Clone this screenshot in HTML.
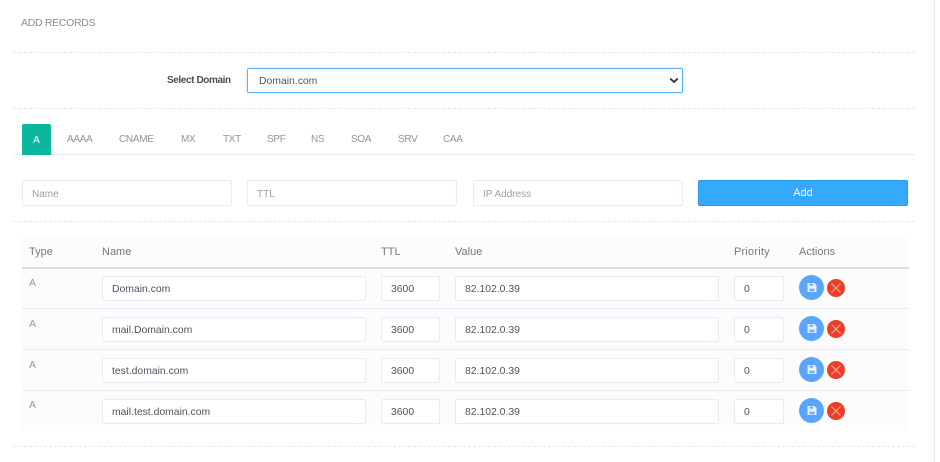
<!DOCTYPE html>
<html><head><meta charset="utf-8">
<style>
html,body{margin:0;padding:0;background:#fff}
body{width:940px;height:462px;position:relative;overflow:hidden;font-family:"Liberation Sans",sans-serif;font-size:10.4px;color:#5f6670}
.a{position:absolute;white-space:nowrap}
.t{position:absolute;white-space:nowrap;line-height:14px;height:14px}
.d{position:absolute;left:14px;width:901px;height:0;border-top:1px dashed #e3e8ee}
.i{position:absolute;box-sizing:border-box;height:25px;background:#fff;border:1px solid #e6ecf3;border-radius:2px;line-height:26px;padding-left:9px;color:#4d545d;white-space:nowrap}
.p{height:26px;line-height:27px;color:#9a9fa6;font-size:10px}
.tab{position:absolute;top:133px;line-height:14px;color:#8f959c;white-space:nowrap;font-size:10px;letter-spacing:-.3px}
.h{position:absolute;top:245px;line-height:14px;color:#74797f;white-space:nowrap;font-size:11px}
.s{position:absolute;left:799px;width:25px;height:25px;border-radius:50%;background:#5ba4fb}
.x{position:absolute;left:827px;width:18px;height:18px;border-radius:50%;background:#ee3d26}
.s svg,.x svg{position:absolute;left:0;top:0}
</style></head><body>
<div class="t" style="left:21px;top:16px;color:#8a8d93;font-size:10.5px;letter-spacing:-.3px">ADD RECORDS</div>
<div class="d" style="top:52px"></div>
<div class="t" style="left:167px;top:74px;color:#4b5058;font-size:10px;font-weight:bold;letter-spacing:-.4px">Select Domain</div>
<div class="a" style="left:247px;top:68px;width:436px;height:25px;box-sizing:border-box;border:1px solid #5cb0f6;border-radius:2px;box-shadow:0 0 4px rgba(90,170,245,.35);line-height:26px;padding-left:11px;color:#4d545d">Domain.com
<svg style="position:absolute;left:421px;top:8px" width="10" height="7" viewBox="0 0 10 7"><path d="M1.2 1.5 L5 5 L8.8 1.5" fill="none" stroke="#2b2f33" stroke-width="1.8"/></svg></div>
<div class="d" style="top:108px"></div>
<div class="a" style="left:14px;top:154px;width:901px;height:1px;background:#e6ecf3"></div>
<div class="a" style="left:22px;top:124px;width:29px;height:31px;background:#0cb89c;border-radius:2px 2px 0 0;color:#fff;text-align:center;line-height:33px">A</div>
<div class="tab" style="left:67px">AAAA</div>
<div class="tab" style="left:119px">CNAME</div>
<div class="tab" style="left:181px">MX</div>
<div class="tab" style="left:223px">TXT</div>
<div class="tab" style="left:267px">SPF</div>
<div class="tab" style="left:311px">NS</div>
<div class="tab" style="left:351px">SOA</div>
<div class="tab" style="left:398px">SRV</div>
<div class="tab" style="left:443px">CAA</div>
<div class="i p" style="left:22px;top:180px;width:210px">Name</div>
<div class="i p" style="left:247px;top:180px;width:210px">TTL</div>
<div class="i p" style="left:473px;top:180px;width:210px">IP Address</div>
<div class="a" style="left:698px;top:180px;width:210px;height:26px;box-sizing:border-box;background:#35a9fb;border:1px solid #2a9bec;border-radius:2px;color:#fff;text-align:center;line-height:24px;font-size:11px">Add</div>
<div class="d" style="top:221px"></div>
<div class="a" style="left:22px;top:237px;width:886px;height:194px;background:#fcfcfd"></div>
<div class="a" style="left:22px;top:267px;width:887px;height:2px;background:#dadddf"></div>
<div class="a" style="left:22px;top:308px;width:887px;height:1px;background:#e6ecf3"></div>
<div class="a" style="left:22px;top:349px;width:887px;height:1px;background:#e6ecf3"></div>
<div class="a" style="left:22px;top:390px;width:887px;height:1px;background:#e6ecf3"></div>
<div class="h" style="left:29px">Type</div>
<div class="h" style="left:102px">Name</div>
<div class="h" style="left:381px">TTL</div>
<div class="h" style="left:455px">Value</div>
<div class="h" style="left:734px;letter-spacing:.2px">Priority</div>
<div class="h" style="left:799px">Actions</div>

<div class="t" style="left:29px;top:277px;color:#8f959c">A</div>
<div class="i" style="left:102px;top:276px;width:264px">Domain.com</div>
<div class="i" style="left:381px;top:276px;width:59px">3600</div>
<div class="i" style="left:455px;top:276px;width:264px">82.102.0.39</div>
<div class="i" style="left:734px;top:276px;width:50px">0</div>
<div class="s" style="top:275px"><svg width="25" height="25" viewBox="0 0 25 25"><path d="M8.5 8h7l2 2v7h-9z" fill="#e6f0ff"/><path d="M10.5 8.6h3.6v2.2h-3.6zM10.5 13.6h5v2.8h-5z" fill="#6fb0fb"/></svg></div>
<div class="x" style="top:279px"><svg width="18" height="18" viewBox="0 0 18 18"><path d="M4.5 4.5l9 9M13.5 4.5l-9 9" stroke="#f6b3a8" stroke-width="1"/></svg></div>

<div class="t" style="left:29px;top:318px;color:#8f959c">A</div>
<div class="i" style="left:102px;top:317px;width:264px">mail.Domain.com</div>
<div class="i" style="left:381px;top:317px;width:59px">3600</div>
<div class="i" style="left:455px;top:317px;width:264px">82.102.0.39</div>
<div class="i" style="left:734px;top:317px;width:50px">0</div>
<div class="s" style="top:316px"><svg width="25" height="25" viewBox="0 0 25 25"><path d="M8.5 8h7l2 2v7h-9z" fill="#e6f0ff"/><path d="M10.5 8.6h3.6v2.2h-3.6zM10.5 13.6h5v2.8h-5z" fill="#6fb0fb"/></svg></div>
<div class="x" style="top:320px"><svg width="18" height="18" viewBox="0 0 18 18"><path d="M4.5 4.5l9 9M13.5 4.5l-9 9" stroke="#f6b3a8" stroke-width="1"/></svg></div>

<div class="t" style="left:29px;top:359px;color:#8f959c">A</div>
<div class="i" style="left:102px;top:358px;width:264px">test.domain.com</div>
<div class="i" style="left:381px;top:358px;width:59px">3600</div>
<div class="i" style="left:455px;top:358px;width:264px">82.102.0.39</div>
<div class="i" style="left:734px;top:358px;width:50px">0</div>
<div class="s" style="top:357px"><svg width="25" height="25" viewBox="0 0 25 25"><path d="M8.5 8h7l2 2v7h-9z" fill="#e6f0ff"/><path d="M10.5 8.6h3.6v2.2h-3.6zM10.5 13.6h5v2.8h-5z" fill="#6fb0fb"/></svg></div>
<div class="x" style="top:361px"><svg width="18" height="18" viewBox="0 0 18 18"><path d="M4.5 4.5l9 9M13.5 4.5l-9 9" stroke="#f6b3a8" stroke-width="1"/></svg></div>

<div class="t" style="left:29px;top:399px;color:#8f959c">A</div>
<div class="i" style="left:102px;top:399px;width:264px">mail.test.domain.com</div>
<div class="i" style="left:381px;top:399px;width:59px">3600</div>
<div class="i" style="left:455px;top:399px;width:264px">82.102.0.39</div>
<div class="i" style="left:734px;top:399px;width:50px">0</div>
<div class="s" style="top:398px"><svg width="25" height="25" viewBox="0 0 25 25"><path d="M8.5 8h7l2 2v7h-9z" fill="#e6f0ff"/><path d="M10.5 8.6h3.6v2.2h-3.6zM10.5 13.6h5v2.8h-5z" fill="#6fb0fb"/></svg></div>
<div class="x" style="top:402px"><svg width="18" height="18" viewBox="0 0 18 18"><path d="M4.5 4.5l9 9M13.5 4.5l-9 9" stroke="#f6b3a8" stroke-width="1"/></svg></div>

<div class="d" style="top:446px"></div>
<div class="a" style="left:934px;top:0;width:1px;height:462px;background:#e6ecf6"></div>
</body></html>
